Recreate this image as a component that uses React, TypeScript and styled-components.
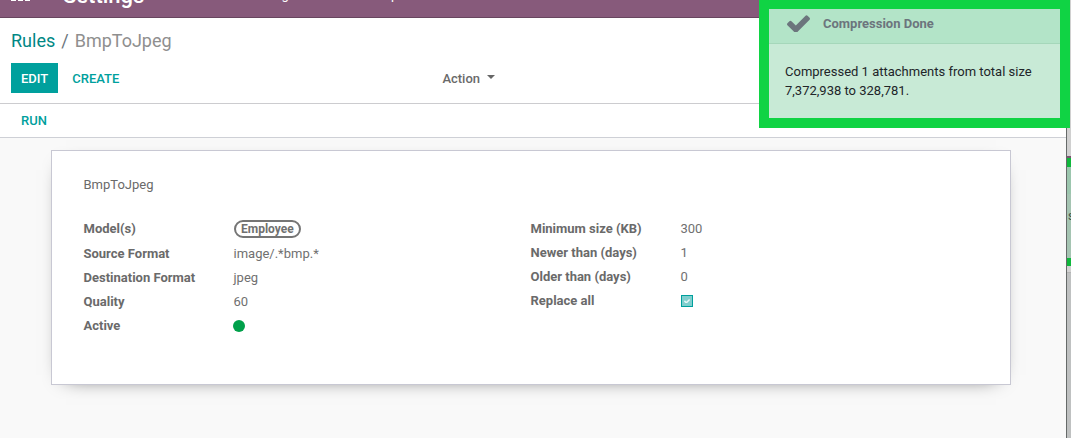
import React from "react";
import styled, { createGlobalStyle } from "styled-components";

const Global = createGlobalStyle`
  * { box-sizing: border-box; }
  body { margin: 0; overflow: hidden; font-family: Roboto, "Liberation Sans", sans-serif; font-size: 13px; line-height: 19.5px; color: #6a6a6a; background: #f9f9f9; }
`;

const Screen = styled.div`
  display: flex;
  width: 1071px;
  height: 438px;
  overflow: hidden;
`;
const Main = styled.main`
  position: relative;
  width: 1067px;
  flex: none;
  display: flex;
  flex-direction: column;
  border-right: 1px solid #666a69;
`;
const Navbar = styled.header`
  height: 18px;
  flex: none;
  display: flex;
  align-items: flex-end;
  overflow: hidden;
  background: #875a7b;
  border-bottom: 1px solid #68465f;
  color: #fff;
`;
const AppsIcon = styled.div`
  display: grid;
  grid-template-columns: repeat(3, 5px);
  gap: 2px;
  margin: 0 33px 16px 11px;
`;
const AppsCell = styled.i`
  height: 4px;
  background: #fff;
`;
const Brand = styled.div`
  width: 137.5px;
  flex: none;
  font-size: 22px;
  font-weight: 500;
  line-height: 46px;
  margin-bottom: -2px;
`;
const MenuItem = styled.div<{ $w: number }>`
  width: ${(p) => p.$w}px;
  flex: none;
  line-height: 46px;
  margin-bottom: -1px;
  white-space: nowrap;
`;
const ControlPanel = styled.section`
  height: 86px;
  flex: none;
  padding: 9px 11px 0;
  background: #fff;
  border-bottom: 1px solid #cccccf;
`;
const Breadcrumb = styled.nav`
  display: flex;
  height: 27px;
  line-height: 27px;
  font-size: 18px;
`;
const Crumb = styled.span<{ $tone: string }>`
  color: ${(p) => p.$tone};
`;
const Slash = styled.span`
  color: #6c757d;
  padding: 0 6px;
`;
const Buttons = styled.div`
  display: flex;
  margin-top: 9px;
  align-items: center;
`;
const Button = styled.button<{ $primary?: boolean }>`
  height: 30px;
  padding: 1px 10px 0;
  border: 0;
  font: 500 13px/30px Roboto, sans-serif;
  color: ${(p) => (p.$primary ? "#fff" : "#00a09d")};
  background: ${(p) => (p.$primary ? "#00a09d" : "transparent")};
  & + & { margin-left: 4px; }
`;
const Action = styled.div`
  display: flex;
  align-items: center;
  margin-left: 313px;
  padding-top: 2px;
  font-weight: 500;
`;
const Caret = styled.i`
  margin: -5px 0 0 7px;
  border: 4px solid transparent;
  border-top-color: #666;
  border-bottom: 0;
`;
const StatusBar = styled.section`
  height: 34px;
  flex: none;
  padding: 1px 11px;
  background: #fff;
  border-bottom: 1px solid #ced0d6;
`;
const Body = styled.section`
  flex: 1;
  padding: 12px 55px 0 51px;
  background: #f9f9f9;
`;
const Sheet = styled.article`
  height: 235px;
  padding: 24px 31.5px;
  background: #fff;
  border: 1px solid #c8c8d3;
  box-shadow: 0 5px 20px -15px #000;
`;
const Name = styled.div`
  line-height: 20px;
  margin-bottom: 22px;
`;
const Columns = styled.div`
  display: grid;
  grid-template-columns: 447px 1fr;
  align-items: start;
`;
const Fields = styled.dl`
  margin: 0;
`;
const Row = styled.div<{ $h?: number }>`
  display: flex;
  align-items: center;
  height: 24px;
  margin-bottom: ${(p) => (p.$h ?? 24) - 24}px;
`;
const Label = styled.dt`
  width: 150px;
  font-weight: 700;
`;
const Value = styled.dd`
  margin: 0;
  display: flex;
  color: #707070;
`;
const Tag = styled.span`
  height: 18px;
  padding: 0 5.5px;
  border: 2px solid #757575;
  border-radius: 9px;
  font-size: 12px;
  font-weight: 700;
  line-height: 14px;
`;
const Dot = styled.i`
  width: 12px;
  height: 12px;
  margin-left: -0.5px;
  border-radius: 50%;
  background: #00a04a;
`;
const Checkbox = styled.span`
  width: 12px;
  height: 12px;
  display: grid;
  place-items: center;
  background: #80cfce;
  border: 1px solid #00a09d;
`;
const Toast = styled.aside`
  position: absolute;
  top: 0;
  left: 759px;
  width: 311px;
  height: 128px;
  border: 10px solid #10d344;
  border-top-width: 9px;
  background: #c8ead6;
  z-index: 2;
`;
const ToastHead = styled.div`
  height: 35px;
  display: flex;
  align-items: center;
  padding: 0 0 5px 17.5px;
  gap: 13.5px;
  background: #b3e4c8;
  border-bottom: 1px solid #a5d7ba;
  color: #6c757d;
  font-weight: 700;
`;
const ToastText = styled.p`
  margin: 0;
  padding: 18px 16px;
  line-height: 19px;
  color: #212529;
`;
const Behind = styled.div`
  flex: 1;
  overflow: hidden;
  background: #c2c4c4;
`;
const Strip = styled.div<{ $h: number; $c: string }>`
  height: ${(p) => p.$h}px;
  background: ${(p) => p.$c};
  overflow: hidden;
`;
const Peek = styled.span`
  display: block;
  margin: 15px 0 0 1px;
  font-size: 12px;
  line-height: 14px;
  color: #3f5548;
`;

const Check = ({ size, color }: { size: number; color: string }) => (
  <svg width={size} height={(size * 1213) / 1550} viewBox="121 309 1550 1213" fill={color}>
    <path d="M1671 566q0 40-28 68l-724 724-136 136q-28 28-68 28t-68-28l-136-136-362-362q-28-28-28-68t28-68l136-136q28-28 68-28t68 28l294 295 656-657q28-28 68-28t68 28l136 136q28 28 28 68z" />
  </svg>
);

const Field = ({ label, h, children }: { label: string; h?: number; children: React.ReactNode }) => (
  <Row $h={h}>
    <Label>{label}</Label>
    <Value>{children}</Value>
  </Row>
);

export default function App() {
  return (
    <>
      <Global />
      <Screen>
        <Main>
          <Navbar>
            <AppsIcon><AppsCell /><AppsCell /><AppsCell /></AppsIcon>
            <Brand>Settings</Brand>
            <MenuItem $w={115.5}>General Settings</MenuItem>
            <MenuItem $w={330}>Users &amp; Companies</MenuItem>
          </Navbar>
          <ControlPanel>
            <Breadcrumb>
              <Crumb $tone="#008784">Rules</Crumb>
              <Slash>/</Slash>
              <Crumb $tone="#8f8f8f">BmpToJpeg</Crumb>
            </Breadcrumb>
            <Buttons>
              <Button $primary>EDIT</Button>
              <Button>CREATE</Button>
              <Action>Action<Caret /></Action>
            </Buttons>
          </ControlPanel>
          <StatusBar><Button>RUN</Button></StatusBar>
          <Body>
            <Sheet>
              <Name>BmpToJpeg</Name>
              <Columns>
                <Fields>
                  <Field label="Model(s)" h={25}><Tag>Employee</Tag></Field>
                  <Field label="Source Format">image/.*bmp.*</Field>
                  <Field label="Destination Format">jpeg</Field>
                  <Field label="Quality">60</Field>
                  <Field label="Active"><Dot /></Field>
                </Fields>
                <Fields>
                  <Field label="Minimum size (KB)">300</Field>
                  <Field label="Newer than (days)">1</Field>
                  <Field label="Older than (days)">0</Field>
                  <Field label="Replace all"><Checkbox><Check size={6} color="#e8f7f7" /></Checkbox></Field>
                </Fields>
              </Columns>
            </Sheet>
          </Body>
          <Toast>
            <ToastHead><Check size={23} color="#6c757d" />Compression Done</ToastHead>
            <ToastText>Compressed 1 attachments from total size 7,372,938 to 328,781.</ToastText>
          </Toast>
        </Main>
        <Behind>
          <Strip $h={156} $c="#d0d0d0" />
          <Strip $h={2} $c="#7a5670" />
          <Strip $h={9} $c="#0fb83c" />
          <Strip $h={27} $c="#9cc6ae" />
          <Strip $h={64} $c="#a5c4b2"><Peek>s</Peek></Strip>
          <Strip $h={8} $c="#0fb83c" />
          <Strip $h={6} $c="#d2d2d2" />
          <Strip $h={1} $c="#b4b4b4" />
          <Strip $h={165} $c="#bfc1c1" />
        </Behind>
      </Screen>
    </>
  );
}
